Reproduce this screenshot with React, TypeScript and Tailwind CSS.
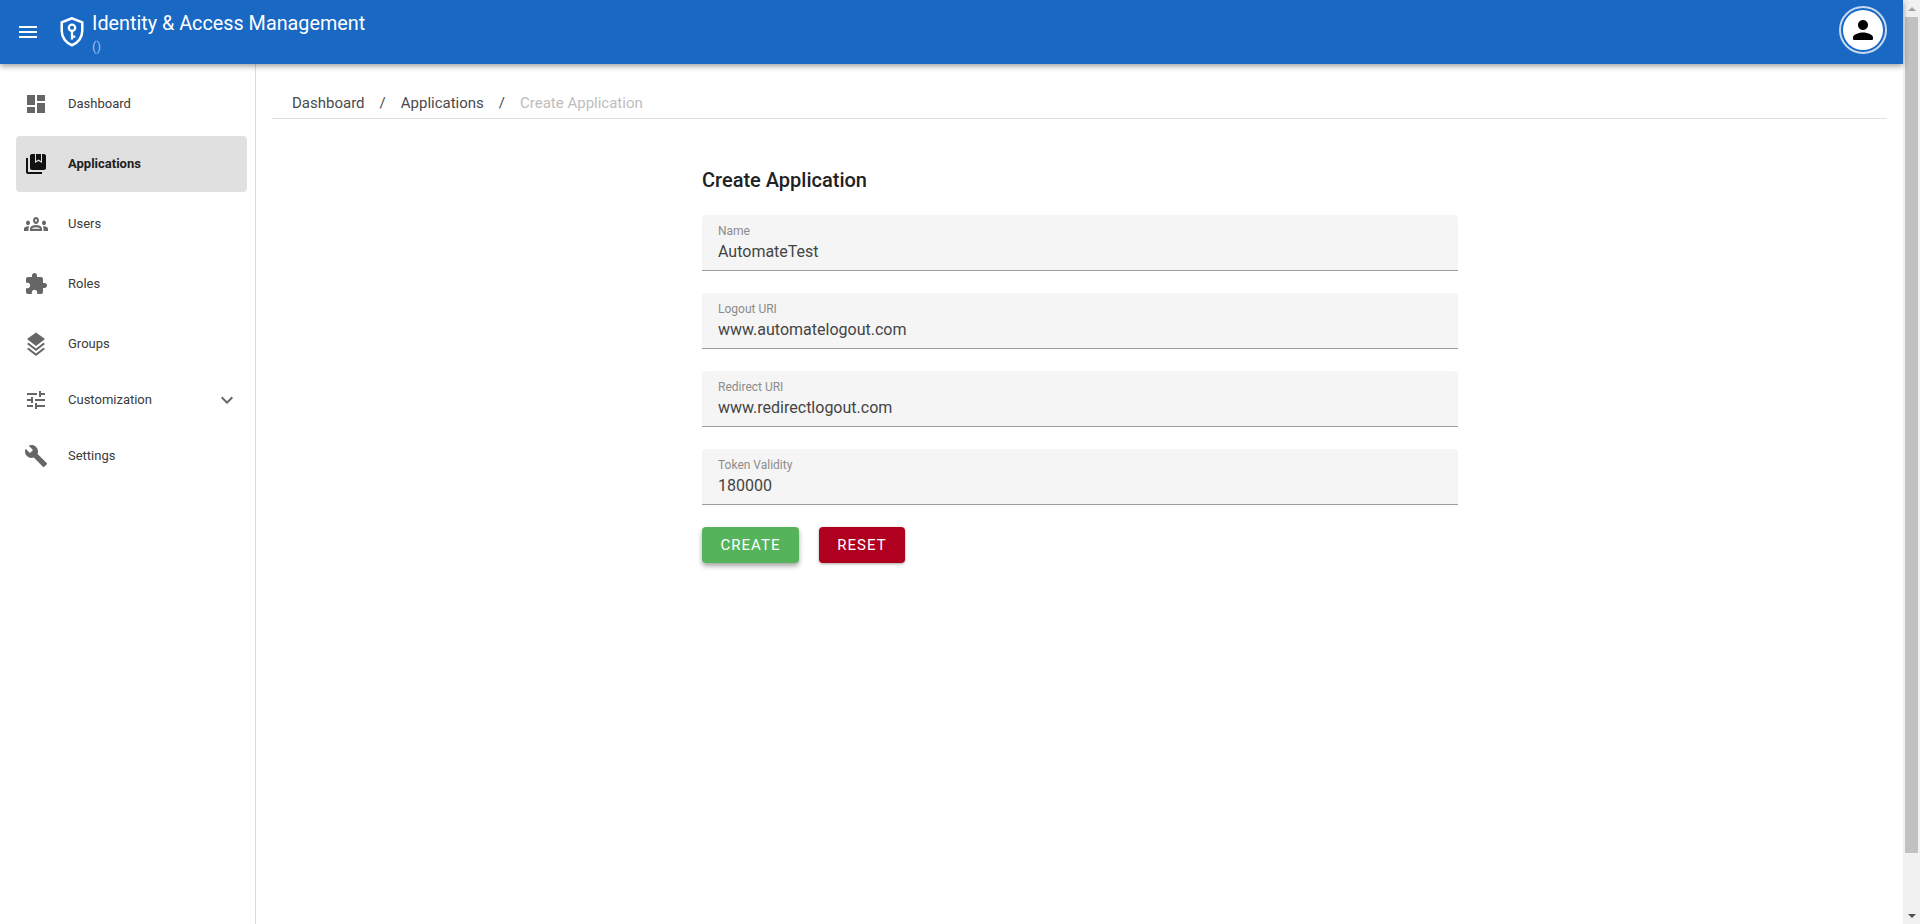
import { ReactNode } from "react";

const font = { fontFamily: "Roboto, sans-serif" };

function Icon({ d, className }: { d: string; className?: string }) {
    return (
        <svg viewBox="0 0 24 24" className={className} fill="currentColor" fillRule="evenodd">
            <path d={d} />
        </svg>
    );
}

const icons = {
    dashboard: "M3 13h8V3H3v10zm0 8h8v-6H3v6zm10 0h8V11h-8v10zm0-18v6h8V3h-8z",
    apps: "M4 6H2v14c0 1.1.9 2 2 2h14v-2H4V6zM20 2H8c-1.1 0-2 .9-2 2v12c0 1.1.9 2 2 2h12c1.1 0 2-.9 2-2V4c0-1.1-.9-2-2-2zM11 2h1v7l2.5-1.5L17 9V2h1v9l-3.5-2-3.5 2z",
    users: "M4 13c1.1 0 2-.9 2-2s-.9-2-2-2-2 .9-2 2 .9 2 2 2zm1.13 1.1c-.37-.06-.74-.1-1.13-.1-.99 0-1.93.21-2.78.58C.48 14.9 0 15.62 0 16.43V18h4.5v-1.61c0-.83.23-1.61.63-2.29zM20 13c1.1 0 2-.9 2-2s-.9-2-2-2-2 .9-2 2 .9 2 2 2zm4 3.43c0-.81-.48-1.53-1.22-1.85-.85-.37-1.79-.58-2.78-.58-.39 0-.76.04-1.13.1.4.68.63 1.46.63 2.29V18H24v-1.57zm-7.76-2.78C15.07 13.14 13.63 12.75 12 12.75c-1.63 0-3.07.4-4.24.91C6.68 14.13 6 15.21 6 16.39V18h12v-1.61c0-1.18-.68-2.26-1.76-2.74zM8.07 16c.09-.23.13-.39.91-.69.97-.38 1.99-.56 3.02-.56s2.05.18 3.02.56c.77.3.81.46.91.69H8.07zM12 8c.55 0 1 .45 1 1s-.45 1-1 1-1-.45-1-1 .45-1 1-1m0-2c-1.66 0-3 1.34-3 3s1.34 3 3 3 3-1.34 3-3-1.34-3-3-3z",
    roles: "M20.5 11H19V7c0-1.1-.9-2-2-2h-4V3.5C13 2.12 11.88 1 10.5 1S8 2.12 8 3.5V5H4c-1.1 0-1.99.9-1.99 2v3.8H3.5c1.49 0 2.7 1.21 2.7 2.7s-1.21 2.7-2.7 2.7H2V20c0 1.1.9 2 2 2h3.8v-1.5c0-1.49 1.21-2.7 2.7-2.7 1.49 0 2.7 1.21 2.7 2.7V22H17c1.1 0 2-.9 2-2v-4h1.5c1.38 0 2.5-1.12 2.5-2.5S21.88 11 20.5 11z",
    groups: "M12 .5 3 7l9 7 9-7zM4.6 10.8 3 12l9 7 9-7-1.6-1.2L12 16.6zM4.6 15.8 3 17l9 7 9-7-1.6-1.2L12 21.6z",
    tune: "M3 17v2h6v-2H3zM3 5v2h10V5H3zm10 16v-2h8v-2h-8v-2h-2v6h2zM7 9v2H3v2h4v2h2V9H7zm14 4v-2H11v2h10zm-6-4h2V7h4V5h-4V3h-2v6z",
    build: "M22.7 19l-9.1-9.1c.9-2.3.4-5-1.5-6.9-2-2-5-2.4-7.4-1.3L9 6 6 9 1.6 4.7C.4 7.1.9 10.1 2.9 12.1c1.9 1.9 4.6 2.4 6.9 1.5l9.1 9.1c.4.4 1 .4 1.4 0l2.3-2.3c.5-.4.5-1.1.1-1.4z",
    menu: "M3 18h18v-2H3v2zm0-5h18v-2H3v2zm0-7v2h18V6H3z",
    chevron: "M16.59 8.59L12 13.17 7.41 8.59 6 10l6 6 6-6z",
    person: "M12 12c2.21 0 4-1.79 4-4s-1.79-4-4-4-4 1.79-4 4 1.79 4 4 4zm0 2c-2.67 0-8 1.34-8 4v1c0 .55.45 1 1 1h14c.55 0 1-.45 1-1v-1c0-2.66-5.33-4-8-4z",
};

function NavItem({ icon, label, active, height, iconClass, children }: { icon: string; label: string; active?: boolean; height: string; iconClass?: string; children?: ReactNode }) {
    return (
        <div className={`flex items-center rounded pl-[8px] pr-[8px] ${height} ${active ? "bg-[#e0e0e0] font-bold text-[#212121]" : "text-[#3a3a3a]"}`}>
            <Icon d={icon} className={`h-6 w-6 ${active ? "text-[#111111]" : "text-[#666666]"} ${iconClass ?? ""}`} />
            <span className="ml-[20px] flex-1 text-[13px]">{label}</span>
            {children}
        </div>
    );
}

function Field({ label, value }: { label: string; value: string }) {
    return (
        <div className="h-[56px] rounded-t border-b border-[#9e9e9e] bg-[#f5f5f5] px-4 pt-[9px]">
            <div className="text-[12px] leading-[14px] text-[#8c8c8c]">{label}</div>
            <div className="mt-[3px] text-[16px] leading-[22px] text-[#444444]">{value}</div>
        </div>
    );
}

export default function App() {
    return (
        <div className="flex h-[924px] overflow-hidden bg-white" style={font}>
            <div className="flex min-w-0 flex-1 flex-col">
                <header className="z-10 flex h-16 shrink-0 items-center bg-[#1868c4] pl-[16px] pr-[16px] text-white shadow-[0_2px_6px_rgba(0,0,0,0.4)]">
                    <Icon d={icons.menu} className="h-6 w-6" />
                    <svg viewBox="0 0 24 28" className="ml-[18px] h-[32px] w-[28px]" fill="none">
                        <path d="M12 2 3 5.5v7.5c0 6 3.8 10.8 9 12.6 5.2-1.8 9-6.6 9-12.6V5.5L12 2z" stroke="white" strokeWidth="2.2" />
                        <circle cx="12" cy="10.3" r="2.8" stroke="white" strokeWidth="2" />
                        <path d="M12 13.2V20.5M12 18h3" stroke="white" strokeWidth="2" />
                    </svg>
                    <div className="ml-[6px] flex flex-col pt-[3px]">
                        <div className="text-[19.8px] leading-[24px]">Identity &amp; Access Management</div>
                        <div className="mt-[2px] text-[13px] leading-[18px] text-[#9fc3ea]">()</div>
                    </div>
                    <div className="mb-1 ml-auto flex h-[48px] w-[48px] items-center justify-center rounded-full border-2 border-[#c9d9ee] bg-[#1868c4]">
                        <div className="flex h-[40px] w-[40px] items-center justify-center rounded-full bg-white">
                            <Icon d={icons.person} className="h-[30px] w-[30px] text-black" />
                        </div>
                    </div>
                </header>
                <div className="flex min-h-0 flex-1">
                    <aside className="w-[256px] shrink-0 border-r border-[#dcdcdc] pl-4 pr-[8px] pt-3">
                        <NavItem icon={icons.dashboard} label="Dashboard" height="h-[56px]" />
                        <div className="mt-1">
                            <NavItem icon={icons.apps} label="Applications" active height="h-[56px]" />
                        </div>
                        <div className="mt-1">
                            <NavItem icon={icons.users} label="Users" height="h-[56px]" iconClass="scale-y-[1.17]" />
                        </div>
                        <div className="mt-1">
                            <NavItem icon={icons.roles} label="Roles" height="h-[56px]" />
                        </div>
                        <div className="mt-1">
                            <NavItem icon={icons.groups} label="Groups" height="h-[56px]" />
                        </div>
                        <div className="mt-[2px]">
                            <NavItem icon={icons.tune} label="Customization" height="h-[52px]">
                                <Icon d={icons.chevron} className="h-6 w-6 text-[#666666]" />
                            </NavItem>
                        </div>
                        <div className="mt-[2px]">
                            <NavItem icon={icons.build} label="Settings" height="h-[56px]" />
                        </div>
                    </aside>
                    <main className="min-w-0 flex-1 px-4">
                        <nav className="mt-[27px] flex h-[28px] items-start border-b border-[#e0e0e0] pl-5 text-[15px] leading-[24px] text-[#4a4a4a]">
                            <span>Dashboard</span>
                            <span className="mx-[15px]">/</span>
                            <span>Applications</span>
                            <span className="mx-[15px]">/</span>
                            <span className="text-[#bdbdbd]">Create Application</span>
                        </nav>
                        <form className="ml-[430px] mt-[49px] w-[756px]">
                            <h1 className="text-[20px] font-medium leading-[24px] text-[#212121]">Create Application</h1>
                            <div className="mt-[23px] flex flex-col gap-[22px]">
                                <Field label="Name" value="AutomateTest" />
                                <Field label="Logout URI" value="www.automatelogout.com" />
                                <Field label="Redirect URI" value="www.redirectlogout.com" />
                                <Field label="Token Validity" value="180000" />
                            </div>
                            <div className="mt-[22px] flex gap-5">
                                <button type="button" className="h-9 w-[97px] rounded bg-[#55b45a] text-[15px] font-normal tracking-[1px] text-white shadow-[0_3px_5px_rgba(0,0,0,0.35)]">CREATE</button>
                                <button type="button" className="h-9 w-[86px] rounded bg-[#b00020] text-[15px] font-normal tracking-[1px] text-white shadow-[0_1px_3px_rgba(0,0,0,0.35)]">RESET</button>
                            </div>
                        </form>
                    </main>
                </div>
            </div>
            <div className="flex w-[17px] shrink-0 flex-col items-center bg-[#f1f1f1]">
                <div className="flex h-[17px] items-center justify-center">
                    <div className="h-0 w-0 border-x-[4px] border-b-[4px] border-x-transparent border-b-[#a3a3a3]" />
                </div>
                <div className="h-[836px] w-[13px] bg-[#c1c1c1]" />
                <div className="mt-auto flex h-[17px] items-center justify-center">
                    <div className="h-0 w-0 border-x-[4px] border-t-[4px] border-x-transparent border-t-[#505050]" />
                </div>
            </div>
        </div>
    );
}
